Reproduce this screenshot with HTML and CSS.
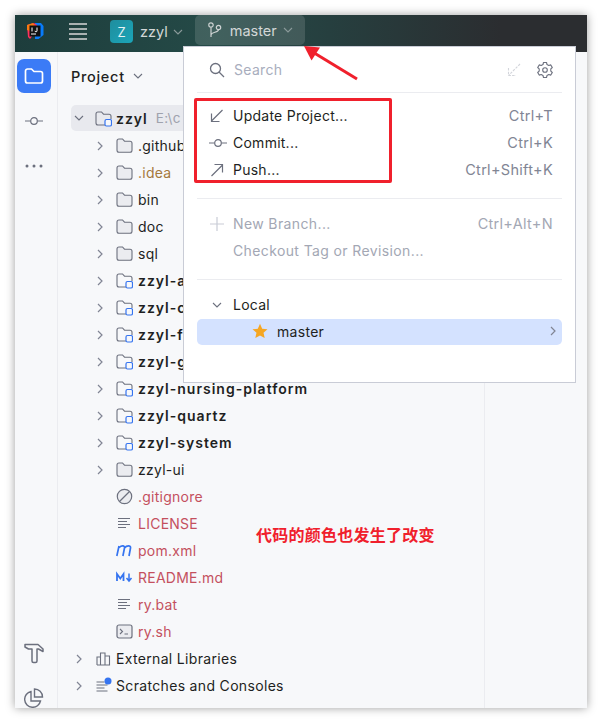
FILE: index.html
```html
<!DOCTYPE html>
<html lang="zh">
<head>
<meta charset="utf-8">
<title>zzyl</title>
<link rel="stylesheet" href="styles.css">
</head>
<body>
<svg class="defs" width="0" height="0" aria-hidden="true">
  <symbol id="folder" viewBox="0 0 17 17"><path d="M1 4a2 2 0 0 1 2-2h3.500l2 2.200h5.500a2 2 0 0 1 2 2v7a2 2 0 0 1-2 2H3a2 2 0 0 1-2-2z" fill="#ebecf0" stroke="#6c707e" stroke-width="1.100"/></symbol>
  <symbol id="module" viewBox="0 0 17 17"><path d="M10 15H3a2 2 0 0 1-2-2V4a2 2 0 0 1 2-2h3.500l2 2.200h5.500a2 2 0 0 1 2 2V9" fill="none" stroke="#6c707e" stroke-width="1.100"/><rect x="10" y="9.500" width="6.500" height="6.500" rx="1.500" fill="#f7f8fa" stroke="#3574f0" stroke-width="1.200"/></symbol>
  <symbol id="right" viewBox="0 0 10 10"><path d="M3 1l4 4-4 4" fill="none" stroke="#818594" stroke-width="1.200"/></symbol>
  <symbol id="down" viewBox="0 0 10 10"><path d="M1 3l4 4 4-4" fill="none" stroke="currentColor" stroke-width="1.100"/></symbol>
  <symbol id="text" viewBox="0 0 17 17"><path d="M2 3.500h12M2 6.500h9M2 9.500h12M2 12.500h8" fill="none" stroke="#6c707e" stroke-width="1.200"/></symbol>
  <symbol id="commit" viewBox="0 0 18 10"><path d="M0 5h5.500M12.500 5H18" stroke="#6c707e" stroke-width="1.200"/><circle cx="9" cy="5" r="3.300" fill="none" stroke="#6c707e" stroke-width="1.200"/></symbol>
</svg>
<div class="page">
  <div class="window">
    <header class="topbar">
      <svg class="logo" viewBox="0 0 18 18" aria-hidden="true">
        <path d="M9 1h6l2.500 3v9l-5 4H9z" fill="#087cfa"/>
        <path d="M1 3l7-2 3 2v5L4 17l-2-2z" fill="#fe315d"/>
        <path d="M1 3l6-2 2 3-5 5-3-1z" fill="#f97a12"/>
        <rect x="3.500" y="3.500" width="11" height="11" fill="#111"/>
        <path d="M5 12h5" stroke="#fff" stroke-width="1"/>
        <path d="M6 5.500v4M11 5.500v3.300a1 1 0 0 1-2 0" fill="none" stroke="#fff" stroke-width="1"/>
      </svg>
      <svg class="hamburger" viewBox="0 0 18 18" aria-hidden="true"><path d="M0 2h18M0 7h18M0 12h18M0 17h18" stroke="#a9b1b1" stroke-width="2"/></svg>
      <div class="project">
        <span class="badge">Z</span>
        <span class="proj-name">zzyl</span>
        <svg class="chev-h"><use href="#down"/></svg>
      </div>
      <div class="branch">
        <svg class="branch-ic" viewBox="0 0 15 16" aria-hidden="true"><g fill="none" stroke="#ced3d3" stroke-width="1.200"><circle cx="3" cy="3" r="2.200"/><circle cx="10.500" cy="5.500" r="2.200"/><path d="M3 5.200V15M3 13c0-3 7.500-2.500 7.500-5.300"/></g></svg>
        <span class="branch-name">master</span>
        <svg class="chev-h"><use href="#down"/></svg>
      </div>
    </header>
    <div class="main">
      <nav class="rail">
        <div class="rail-active">
          <svg class="rail-folder" viewBox="0 0 20 20" aria-hidden="true"><path d="M1.500 5a2 2 0 0 1 2-2h4l2.500 2.500h6.500a2 2 0 0 1 2 2V15a2 2 0 0 1-2 2h-13a2 2 0 0 1-2-2z" fill="none" stroke="#fff" stroke-width="1.700"/></svg>
        </div>
        <svg class="rail-commit"><use href="#commit"/></svg>
        <svg class="rail-dots" viewBox="0 0 18 4" aria-hidden="true"><circle cx="2" cy="2" r="1.500" fill="#6c707e"/><circle cx="9" cy="2" r="1.500" fill="#6c707e"/><circle cx="16" cy="2" r="1.500" fill="#6c707e"/></svg>
        <svg class="rail-hammer" viewBox="0 0 20 21" aria-hidden="true"><path d="M1 1.500h13l5 4.500v2.500l-4.500-2.500H13v12a1.500 1.500 0 0 1-1.500 1.500h-2A1.500 1.500 0 0 1 8 18V6H4.500L1 4z" fill="none" stroke="#6c707e" stroke-width="1.500" stroke-linejoin="round"/></svg>
        <svg class="rail-pie" viewBox="0 0 20 20" aria-hidden="true"><path d="M7 3.500a8 8 0 1 0 9.500 9.500H7z" fill="none" stroke="#6c707e" stroke-width="1.400"/><path d="M10.500 1a8 8 0 0 1 8 8h-8z" fill="none" stroke="#6c707e" stroke-width="1.400"/></svg>
      </nav>
      <section class="panel">
        <div class="panel-head">
          <span class="panel-title">Project</span>
          <svg class="chev-p"><use href="#down"/></svg>
        </div>
        <div class="tree">
          <div class="row l0 selected"><svg class="tw open"><use href="#down"/></svg><svg class="ic"><use href="#module"/></svg><span class="bold">zzyl</span><span class="path">E:\c</span></div>
          <div class="row"><svg class="tw"><use href="#right"/></svg><svg class="ic"><use href="#folder"/></svg><span>.github</span></div>
          <div class="row"><svg class="tw"><use href="#right"/></svg><svg class="ic"><use href="#folder"/></svg><span class="amber">.idea</span></div>
          <div class="row"><svg class="tw"><use href="#right"/></svg><svg class="ic"><use href="#folder"/></svg><span>bin</span></div>
          <div class="row"><svg class="tw"><use href="#right"/></svg><svg class="ic"><use href="#folder"/></svg><span>doc</span></div>
          <div class="row"><svg class="tw"><use href="#right"/></svg><svg class="ic"><use href="#folder"/></svg><span>sql</span></div>
          <div class="row"><svg class="tw"><use href="#right"/></svg><svg class="ic"><use href="#module"/></svg><span class="bold">zzyl-a</span></div>
          <div class="row"><svg class="tw"><use href="#right"/></svg><svg class="ic"><use href="#module"/></svg><span class="bold">zzyl-c</span></div>
          <div class="row"><svg class="tw"><use href="#right"/></svg><svg class="ic"><use href="#module"/></svg><span class="bold">zzyl-f</span></div>
          <div class="row"><svg class="tw"><use href="#right"/></svg><svg class="ic"><use href="#module"/></svg><span class="bold">zzyl-g</span></div>
          <div class="row"><svg class="tw"><use href="#right"/></svg><svg class="ic"><use href="#module"/></svg><span class="bold">zzyl-nursing-platform</span></div>
          <div class="row"><svg class="tw"><use href="#right"/></svg><svg class="ic"><use href="#module"/></svg><span class="bold">zzyl-quartz</span></div>
          <div class="row"><svg class="tw"><use href="#right"/></svg><svg class="ic"><use href="#module"/></svg><span class="bold">zzyl-system</span></div>
          <div class="row"><svg class="tw"><use href="#right"/></svg><svg class="ic"><use href="#folder"/></svg><span>zzyl-ui</span></div>
          <div class="row"><span class="tw"></span><svg class="ic" viewBox="0 0 17 17" aria-hidden="true"><circle cx="8.500" cy="8.500" r="7.200" fill="#ebecf0" stroke="#6c707e" stroke-width="1.200"/><path d="M3.500 13.500l10-10" stroke="#6c707e" stroke-width="1.200"/></svg><span class="red">.gitignore</span></div>
          <div class="row"><span class="tw"></span><svg class="ic"><use href="#text"/></svg><span class="red">LICENSE</span></div>
          <div class="row"><span class="tw"></span><svg class="ic" viewBox="0 0 17 17" aria-hidden="true"><path d="M.8 14L3 4M3.200 5.500C5.500 3.300 9 3.300 8.500 6L6.900 14M8.500 5.800C10.800 3.300 15 3.300 14.500 6L13 14" fill="none" stroke="#3574f0" stroke-width="1.700"/></svg><span class="red">pom.xml</span></div>
          <div class="row"><span class="tw"></span><svg class="ic" viewBox="0 0 17 17" aria-hidden="true"><path d="M1 12V5l3.300 4.500L7.500 5v7" fill="none" stroke="#3574f0" stroke-width="1.800"/><path d="M13 4.500v7M10.500 9l2.500 3 2.500-3" fill="none" stroke="#3574f0" stroke-width="1.500"/></svg><span class="red">README.md</span></div>
          <div class="row"><span class="tw"></span><svg class="ic"><use href="#text"/></svg><span class="red">ry.bat</span></div>
          <div class="row"><span class="tw"></span><svg class="ic" viewBox="0 0 17 17" aria-hidden="true"><rect x="1" y="2" width="15" height="13" rx="2" fill="#ebecf0" stroke="#6c707e" stroke-width="1.200"/><path d="M4 6l2.500 2.500L4 11M8.500 11H12" fill="none" stroke="#6c707e" stroke-width="1.100"/></svg><span class="red">ry.sh</span></div>
          <div class="row l0"><svg class="tw"><use href="#right"/></svg><svg class="ic" viewBox="0 0 17 17" aria-hidden="true"><path d="M2 15V7h3.500v8M5.500 15V3H10v12M10 15V6h4.500v9zM2 15h12.500" fill="none" stroke="#6c707e" stroke-width="1.100"/></svg><span>External Libraries</span></div>
          <div class="row l0"><svg class="tw"><use href="#right"/></svg><svg class="ic" viewBox="0 0 17 17" aria-hidden="true"><path d="M1.500 5h8M1.500 8h11M1.500 11h8M1.500 14h11" stroke="#6c707e" stroke-width="1.100"/><circle cx="13" cy="4" r="3.500" fill="#3574f0"/></svg><span>Scratches and Consoles</span></div>
        </div>
      </section>
      <aside class="side"></aside>
    </div>
    <div class="popup">
      <div class="search">
        <svg class="ic16" viewBox="0 0 16 16" aria-hidden="true"><circle cx="6.500" cy="6.500" r="5" fill="none" stroke="#6c707e" stroke-width="1.300"/><path d="M10 10l5 5" stroke="#6c707e" stroke-width="1.300"/></svg>
        <span class="search-label">Search</span>
        <svg class="fetch" viewBox="0 0 14 14" aria-hidden="true"><path d="M13 1L2 12M1.500 5v7.500H9" fill="none" stroke="#d3d5db" stroke-width="1.100" stroke-dasharray="2.500 1.200"/></svg>
        <svg class="gear" viewBox="0 0 16 16" aria-hidden="true"><path d="M6.500 1h3l.5 2 1.800 1 2-.6 1.500 2.600-1.500 1.400v2.200l1.500 1.400-1.500 2.600-2-.6-1.800 1-.5 2h-3l-.5-2-1.800-1-2 .6L.7 11l1.500-1.400V7.400L.7 6l1.500-2.600 2 .6L6 3z" transform="translate(0 -.500)" fill="none" stroke="#6c707e" stroke-width="1.100" stroke-linejoin="round"/><circle cx="8" cy="8" r="2.300" fill="none" stroke="#6c707e" stroke-width="1.100"/></svg>
      </div>
      <div class="group group-actions">
        <div class="item"><svg class="ic16" viewBox="0 0 16 16" aria-hidden="true"><path d="M13.500 2L2.500 13M2.500 5.500v8h8" fill="none" stroke="#6c707e" stroke-width="1.200"/></svg><span class="label">Update Project...</span><span class="key">Ctrl+T</span></div>
        <div class="item"><svg class="ic-commit"><use href="#commit"/></svg><span class="label">Commit...</span><span class="key">Ctrl+K</span></div>
        <div class="item"><svg class="ic16" viewBox="0 0 16 16" aria-hidden="true"><path d="M2.500 14L13.500 3M5.500 2.500h8v8" fill="none" stroke="#6c707e" stroke-width="1.200"/></svg><span class="label">Push...</span><span class="key">Ctrl+Shift+K</span></div>
      </div>
      <div class="group group-new">
        <div class="item muted"><svg class="ic16" viewBox="0 0 16 16" aria-hidden="true"><path d="M8 1v14M1 8h14" stroke="#c9ccd6" stroke-width="1.200"/></svg><span class="label">New Branch...</span><span class="key">Ctrl+Alt+N</span></div>
        <div class="item muted"><span class="ic16"></span><span class="label">Checkout Tag or Revision...</span></div>
      </div>
      <div class="group-local">
        <div class="item item-local"><svg class="ic16 local-chev"><use href="#down"/></svg><span class="label">Local</span></div>
        <div class="current">
          <svg class="star" viewBox="0 0 16 16" aria-hidden="true"><path d="M8 .8l2.200 4.900 5.300.6-4 3.500 1.200 5.300L8 12.400l-4.700 2.700 1.200-5.300-4-3.500 5.300-.6z" fill="#f5a623"/></svg>
          <span class="label">master</span>
          <svg class="cur-chev"><use href="#right"/></svg>
        </div>
      </div>
    </div>
  </div>
  <div class="redbox"></div>
  <svg class="redarrow" viewBox="0 0 60 40" aria-hidden="true"><path d="M54 33L8 5" stroke="#f0202c" stroke-width="3" fill="none"/><path d="M1 0l16 1.500-8.500 13z" fill="#f0202c"/></svg>
  <div class="note">代码的颜色也发生了改变</div>
</div>
</body>
</html>
```
FILE: styles.css
```css
* { box-sizing: border-box; }
html, body { margin: 0; padding: 0; background: #fff; }
body { font-family: Inter, "Noto Sans CJK SC", sans-serif; font-size: 14px; color: #1e1f22; }
.defs { position: absolute; }
.page { position: relative; width: 602px; height: 723px; padding: 15px; overflow: hidden; }
.window { position: relative; width: 572px; height: 693px; display: flex; flex-direction: column; background: #f7f8fa; box-shadow: 0 0 9px rgba(0,0,0,.38); }

.topbar { height: 37px; flex: none; display: flex; align-items: flex-start; background: linear-gradient(90deg, #1d3d3c 0%, #254a47 35%, #263f3f 55%, #2b2d30 85%); color: #d3d7d7; }
.logo { width: 18px; height: 18px; margin: 7px 0 0 11px; }
.hamburger { width: 18px; height: 18px; margin: 7px 0 0 25px; }
.project { display: flex; align-items: center; height: 30px; margin-left: 23px; }
.badge { width: 23px; height: 23px; border-radius: 4px; background: linear-gradient(135deg, #1f8e9e, #1ba5b8); color: #e6f3f4; display: flex; align-items: center; justify-content: center; font-size: 13px; margin-top: 3px; }
.proj-name { margin: 3px 0 0 7px; font-size: 14.500px; }
.chev-h { width: 10px; height: 10px; margin: 3px 0 0 5px; color: #8b9a9a; }
.branch { display: flex; align-items: center; width: 110px; height: 30px; margin-left: 12px; padding-left: 13px; background: rgba(255,255,255,.13); border-radius: 5px; }
.branch-ic { width: 15px; height: 16px; }
.branch-name { margin-left: 7px; font-size: 14.500px; }
.branch .chev-h { margin: 0 0 0 6px; }

.main { flex: 1; display: flex; min-height: 0; }
.rail { width: 43px; flex: none; display: flex; flex-direction: column; align-items: center; border-right: 1px solid #ebecf0; padding: 7px 4px 0 0; }
.rail-active { width: 34px; height: 34px; background: #3b7bf6; border-radius: 7px; display: flex; align-items: center; justify-content: center; }
.rail-folder { width: 20px; height: 20px; }
.rail-commit { width: 18px; height: 10px; margin-top: 23px; flex: none; }
.rail-dots { width: 18px; height: 4px; margin-top: 38px; flex: none; }
.rail-hammer { width: 20px; height: 21px; margin-top: auto; flex: none; }
.rail-pie { width: 20px; height: 20px; margin: 24px 0 0; flex: none; }

.panel { width: 427px; flex: none; border-right: 1px solid #ebecf0; padding-top: 11px; }
.panel-head { display: flex; align-items: center; height: 26px; padding-left: 13px; }
.panel-title { font-weight: 500; font-size: 14.500px; letter-spacing: .7px; }
.chev-p { width: 10px; height: 10px; margin-left: 8px; color: #6c707e; }
.tree { margin-top: 16px; }
.row { display: flex; align-items: center; height: 27px; padding-left: 34px; white-space: nowrap; letter-spacing: .25px; }
.row.l0 { padding-left: 13px; letter-spacing: .33px; }
.row.selected { background: #e8e9ee; border-radius: 5px; height: 26px; margin: 0 0 1px 13px; padding-left: 0; }
.tw { width: 16px; height: 10px; flex: none; }
.tw.open { color: #6c707e; }
.ic { width: 17px; height: 17px; margin-left: 8px; margin-right: 5px; flex: none; }
.l0 .ic { margin-right: 4px; }
.bold { font-weight: 600; letter-spacing: 1px; }
.path { margin-left: 8px; color: #9fa2ad; font-size: 13.500px; }
.amber { color: #a5793d; }
.red { color: #c4505e; }

.popup { position: absolute; left: 168px; top: 31px; width: 393px; height: 337px; background: #fff; border: 1px solid #c9ccd6; }
.search { display: flex; align-items: center; height: 46px; margin: 0 13px; padding: 0 9px 0 12px; border-bottom: 1px solid #ebecf0; }
.ic16 { width: 16px; height: 16px; flex: none; }
.ic-commit { width: 18px; height: 16px; margin-right: -2px; flex: none; }
.search-label { margin-left: 9px; color: #a8adbd; font-size: 14px; letter-spacing: .3px; flex: 1; }
.fetch { width: 14px; height: 14px; margin-right: 16px; }
.gear { width: 16px; height: 16px; }
.group { margin: 0 13px; border-bottom: 1px solid #ebecf0; }
.group-actions { padding: 9px 0 15px; }
.group-new { padding: 11px 0 15px; }
.group-local { margin: 0 13px; padding-top: 11px; }
.item { display: flex; align-items: center; height: 27px; padding: 0 9px 0 12px; letter-spacing: .25px; }
.item-local { margin-bottom: 1px; }
.item .label { margin-left: 8px; flex: 1; }
.key { color: #818594; font-size: 14.500px; letter-spacing: .3px; }
.muted .label, .muted .key { color: #a3a7b4; }
.muted .label { letter-spacing: .38px; }
.local-chev { color: #6c707e; padding: 3px; }
.current { display: flex; align-items: center; height: 26px; background: #d4e2ff; border-radius: 5px; padding: 0 4px 2px 55px; }
.star { width: 16px; height: 16px; flex: none; }
.current .label { margin-left: 9px; flex: 1; letter-spacing: .3px; }
.cur-chev { width: 10px; height: 10px; }
.side { flex: 1; }

.redbox { position: absolute; left: 194px; top: 98px; width: 198px; height: 85px; border: 3px solid #f0202c; border-radius: 2px; }
.redarrow { position: absolute; left: 303px; top: 46px; width: 60px; height: 40px; }
.note { position: absolute; left: 256px; top: 523px; color: #f0202c; font-weight: 700; font-size: 16px; letter-spacing: .25px; font-family: "Noto Sans CJK SC", sans-serif; line-height: 22px; white-space: nowrap; }
```
